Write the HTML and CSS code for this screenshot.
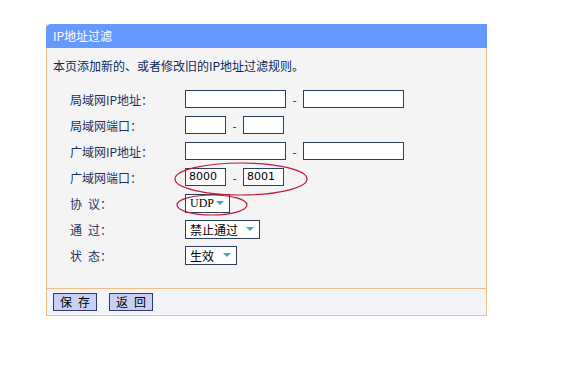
FILE: index.html
```html
<!DOCTYPE html>
<html lang="zh-CN">
<head>
  <meta charset="UTF-8">
  <title>IP地址过滤</title>
  <link rel="stylesheet" href="styles.css">
</head>
<body>
  <div class="panel">
    <div class="panel-title">IP地址过滤</div>
    <div class="panel-body">
      <p class="intro">本页添加新的、或者修改旧的IP地址过滤规则。</p>
      <div class="form">
        <div class="label">局域网IP地址：</div>
        <div class="field"><span class="input ip"></span><span class="dash">-</span><span class="input ip"></span></div>

        <div class="label">局域网端口：</div>
        <div class="field"><span class="input port"></span><span class="dash">-</span><span class="input port"></span></div>

        <div class="label">广域网IP地址：</div>
        <div class="field"><span class="input ip"></span><span class="dash">-</span><span class="input ip"></span></div>

        <div class="label">广域网端口：</div>
        <div class="field"><span class="input port">8000</span><span class="dash">-</span><span class="input port">8001</span></div>

        <div class="label">协&ensp;议：</div>
        <div class="field"><span class="select w-udp">UDP<i class="arrow"></i></span></div>

        <div class="label">通&ensp;过：</div>
        <div class="field"><span class="select w-pass">禁止通过<i class="arrow"></i></span></div>

        <div class="label">状&ensp;态：</div>
        <div class="field"><span class="select w-state">生效<i class="arrow"></i></span></div>
      </div>
    </div>
    <div class="panel-foot">
      <button class="btn">保&ensp;存</button>
      <button class="btn">返&ensp;回</button>
    </div>
  </div>

  <!-- hand-drawn marks over the form -->
  <svg class="marks" width="568" height="389" viewBox="0 0 568 389">
    <ellipse cx="241" cy="179" rx="66" ry="16" fill="none" stroke="#c01c3c" stroke-width="1.2"/>
    <ellipse cx="212" cy="205" rx="35" ry="10" fill="none" stroke="#c01c3c" stroke-width="1.2"/>
  </svg>
</body>
</html>
```

FILE: styles.css
```css
body {
  margin: 0;
  padding: 24px 0 0 46px;
  background: #ffffff;
  font-family: "Noto Sans CJK SC", "DejaVu Sans", sans-serif;
  font-size: 12px;
  color: #1a3366;
}
.panel {
  width: 441px;
  box-sizing: border-box;
  border-left: 1px solid #f0c088;
  border-right: 1px solid #f0c088;
  border-bottom: 1px solid #f0c088;
}
.panel-title {
  height: 24px;
  line-height: 23px;
  margin: 0 -1px;
  padding-left: 7px;
  background: #6699ff;
  color: #ffffff;
  border-top-left-radius: 5px;
}
.panel-body {
  background: #f4f4f4;
  padding: 8px 0 20px 0;
  border-bottom: 1px solid #f0c088;
}
.intro {
  margin: 0 0 10px 0;
  padding-left: 6px;
  line-height: 20px;
  color: #10285a;
}
.form {
  display: grid;
  grid-template-columns: 115px 1fr;
  grid-auto-rows: 26px;
  align-items: center;
  padding-left: 23px;
}
.field {
  display: flex;
  align-items: center;
}
.input {
  box-sizing: border-box;
  height: 18px;
  line-height: 16px;
  padding-left: 3px;
  background: #ffffff;
  border: 1px solid #2e3e5e;
  color: #000000;
  font-family: "DejaVu Sans", sans-serif;
  font-size: 11px;
}
.ip { width: 101px; }
.port { width: 41px; }
.dash {
  width: 17px;
  text-align: center;
  color: #333333;
}
.select {
  box-sizing: border-box;
  height: 19px;
  line-height: 17px;
  padding-left: 4px;
  display: flex;
  align-items: center;
  background: #ffffff;
  border: 1px solid #2e3e5e;
  color: #000000;
}
.w-udp { width: 45px; font-family: "Liberation Serif", serif; }
.w-pass { width: 75px; }
.w-state { width: 52px; }
.arrow {
  margin-left: auto;
  margin-right: 5px;
  width: 0;
  height: 0;
  border-left: 4px solid transparent;
  border-right: 4px solid transparent;
  border-top: 4px solid #3aa8d0;
}
.panel-foot {
  height: 26px;
  display: flex;
  align-items: center;
  gap: 12px;
  padding-left: 6px;
  background: #f2f4fa;
}
.btn {
  box-sizing: border-box;
  height: 18px;
  width: 44px;
  padding: 0;
  font-family: inherit;
  font-size: 12px;
  line-height: 16px;
  color: #000000;
  background: #c8d0f4;
  border: 1px solid #2e3a6a;
}
.marks {
  position: absolute;
  left: 0;
  top: 0;
  pointer-events: none;
}
```
